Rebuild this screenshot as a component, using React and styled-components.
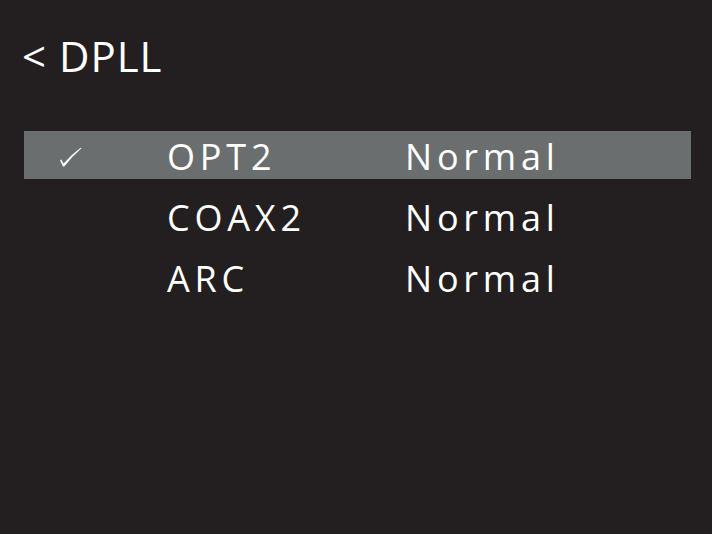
import React from "react";
import styled, { createGlobalStyle } from "styled-components";

const Global = createGlobalStyle`
  html, body { margin: 0; padding: 0; background: #231f20; }
  body { font-family: "Open Sans", "Noto Sans", sans-serif; color: #fff; }
`;

const Screen = styled.div`
  width: 712px;
  height: 534px;
  background: #231f20;
  box-sizing: border-box;
  padding: 28px 21px 0 24px;
  display: flex;
  flex-direction: column;
`;

const Title = styled.div`
  font-size: 42px;
  line-height: 56px;
  color: #fff;
  letter-spacing: 1px;
  margin-left: -2px;
`;

const List = styled.div`
  margin-top: 47px;
  display: flex;
  flex-direction: column;
  gap: 13px;
`;

const Row = styled.div`
  height: 48px;
  display: grid;
  grid-template-columns: 143px 238px 1fr;
  align-items: center;
  background: ${(p) => (p.$selected ? "#6b6e6f" : "transparent")};
  font-size: 36px;
  letter-spacing: 4.8px;
  color: #fff;
`;

const CheckCell = styled.div`
  display: flex;
  align-items: center;
  padding-left: 35px;
  height: 100%;
`;

const Cell = styled.div`
  white-space: nowrap;
  line-height: 48px;
  padding-top: 2px;
`;

const Check = () => (
  <svg width="24" height="22" viewBox="0 0 24 22" style={{ marginTop: 2 }}>
    <path
      d="M1 14.2 L2.2 13.6 L4.6 17.4 Q12 9 22 1.6 L22.4 2.2 Q13 10.5 5.2 20.4 L4 20.6 Z"
      fill="#fff"
    />
  </svg>
);

const rows = [
  { name: "OPT2", status: "Normal", selected: true },
  { name: "COAX2", status: "Normal" },
  { name: "ARC", status: "Normal" },
];

export default function App() {
  return (
    <Screen>
      <Global />
      <Title>&lt; DPLL</Title>
      <List>
        {rows.map((r) => (
          <Row key={r.name} $selected={r.selected}>
            <CheckCell>{r.selected && <Check />}</CheckCell>
            <Cell>{r.name}</Cell>
            <Cell>{r.status}</Cell>
          </Row>
        ))}
      </List>
    </Screen>
  );
}
